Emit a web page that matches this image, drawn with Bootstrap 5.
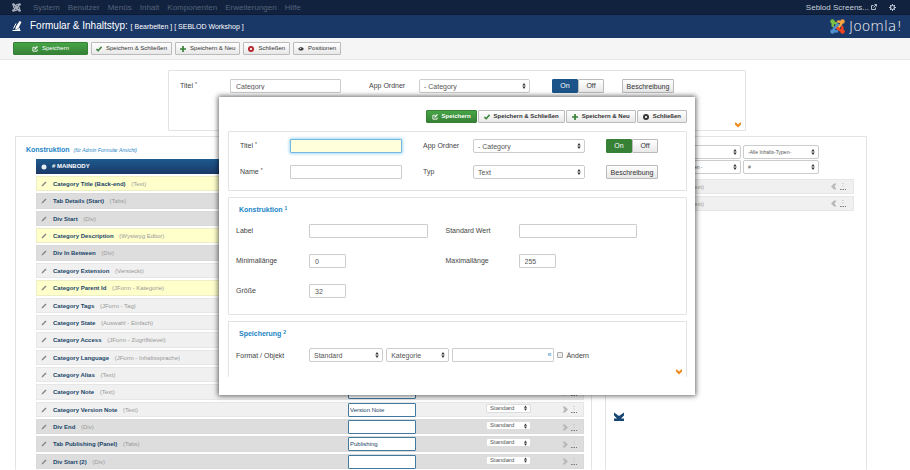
<!DOCTYPE html>
<html lang="de">
<head>
<meta charset="utf-8">
<meta name="viewport" content="width=device-width, initial-scale=1">
<title>Formular &amp; Inhaltstyp</title>
<link href="https://cdn.jsdelivr.net/npm/bootstrap@5.3.0/dist/css/bootstrap.min.css" rel="stylesheet">
<style>
body{font-family:"Liberation Sans",Arial,sans-serif;font-size:7px;line-height:9px;color:#444;background:#fff;height:100vh;overflow:hidden;position:relative}
svg{display:block;flex:none}
a{text-decoration:none;color:inherit}
.topbar{height:15px;background:#10223e;color:#55637b;font-size:8px;padding:0 14px 0 12px;border-bottom:1px solid #0c1b33}
.topbar .main-links{gap:8px}
.user-link{color:#c9d1dd;gap:2px}
.gear-link{margin-left:12px}
.titlebar{height:23px;background:#1a3867;color:#fff;padding:0 8px 0 12px}
.titlebar h1{font-size:10px;line-height:12px;margin:0;font-weight:400}
.titlebar h1 span{font-size:7px}
.brand-word{font-family:"DejaVu Sans",sans-serif;font-weight:200;font-size:14px;line-height:16px;padding-bottom:2px}
.toolbar-strip{height:22px;background:#f5f5f5;border-bottom:1px solid #e6e6e6;padding:0 13px;gap:3px}
.btn.tool{--bs-btn-padding-x:4px;--bs-btn-padding-y:0;--bs-btn-font-size:6px;--bs-btn-border-radius:1px;--bs-btn-color:#333;--bs-btn-border-color:#bbb;height:13px;line-height:11px;display:flex;align-items:center;justify-content:center;gap:4px;background:linear-gradient(#fff,#e8e8e8);white-space:nowrap}
.btn.tool.save{--bs-btn-color:#fff;--bs-btn-border-color:#378137;background:linear-gradient(#46a546,#378137)}
.btn.wide{min-width:75px}
.btn.tool.strong{--bs-btn-padding-x:5px;font-weight:700}
.btn.desc{font-size:7px;width:52px;height:14px;flex:none;padding:0}
.frame{border:1px solid #e3e3e3;border-radius:1px;background:#fff;position:relative}
.outer-form{margin:10px 164px 5px 168px;height:61px;padding:8px 71px 0 11px;gap:22px}
.pair{display:flex;flex:1 1 0;min-width:0}
.outer-form .pair:nth-child(2){margin-left:6px}
.outer-actions{gap:18px}
.form-control.inp,.form-select.sel{font-size:7px;line-height:9px;height:14px;min-height:0;padding:0 5px;border:1px solid #ccc;border-radius:1px;color:#555;flex:1 1 0;min-width:0;width:auto}
.form-select.sel{border-radius:2px;padding:0 9px 0 4px;background-color:#fff;background-image:url("data:image/svg+xml,%3Csvg xmlns='http://www.w3.org/2000/svg' viewBox='0 0 4 7'%3E%3Cpath d='M0 3 2 0 4 3ZM0 4 2 7 4 4Z' fill='%23333'/%3E%3C/svg%3E");background-size:4px 6px;background-position:right 3px center}
.form-control.focus-field{background:#ffffdc;border-color:#72b9e4;box-shadow:0 0 3px 1px #a9d8f3}
.lab{width:50px;flex:none;line-height:9px;padding-top:2px}
.lab sup,.caption-blue sup{font-size:5px;line-height:5px}
.switch{width:52px;flex:none}
.switch .btn{font-size:7px;line-height:12px;height:14px;padding:0;width:50%;border:1px solid #bbb;border-radius:1px;color:#333;background:linear-gradient(#fff,#e8e8e8)}
.switch .btn-check:checked+.btn{background:#1c5489;border-color:#1c5489;color:#fff}
.switch.green .btn-check:checked+.btn{background:#378137;border-color:#378137}
.chev{position:absolute;right:4px;bottom:2px}
.work{display:grid;grid-template-columns:577fr 262fr;padding:0 43px 0 15px;gap:13px;min-height:0}
.left-pane{min-width:0;min-height:0;padding:8px 7px 0 20px;border-bottom:0}
.right-pane{min-width:0;padding:8px 12px 0 54px;border-bottom:0}
.caption-blue{color:#1c84c6;font-weight:700;font-size:7px;line-height:9px;margin:0}
.left-pane .caption-blue{margin-left:-10px;margin-bottom:4px}
.caption-blue em{font-weight:400;font-size:5px;margin-left:2px}
.head-row{height:15px;background:linear-gradient(#1d5a8f,#1a3867);color:#fff;font-size:6px;font-weight:700;padding:0 5px;gap:5px}
.rows{gap:2px;padding:2px 0 1px;list-style:none;margin:0}
.item{flex:1 1 0;min-height:0;display:grid;grid-template-columns:12px 1fr 68px 70px 45px 31px 9px 7px;align-items:center;padding:0 5px 0 4px;background:#f0f0f0;border:1px solid #e6e6e6;font-size:6px;line-height:8px;color:#999}
.item b{color:#1a4568;margin-right:4px}
.item.gray{background:#ddd;border-color:#d9d9d9}
.item.yellow{background:#ffffcc;border-color:#eeeec4}
.item .form-control{font-size:6px;height:14px;border:1px solid #44799f;padding:0 1px;color:#1a4568;grid-column:3}
.item .form-select{font-size:6px;line-height:7px;height:9px;border-color:#ddd;padding-left:3px;grid-column:5;margin-bottom:3px;background-size:3px 6px}
.item .go{grid-column:7}
.filters{gap:2px;margin:0 35px 1px 0}
.filters .sel{font-size:5px}
.filters .sel:last-child{flex:0 0 76px}
.side-list{margin:5px 0 0;padding:0;list-style:none;gap:2px}
.side-list li{height:15px;background:#f0f0f0;border:1px solid #e6e6e6;color:#999;font-size:6px;line-height:8px;padding:0 7px 0 28px;gap:3px}
.mark-end{margin:201px 0 0 -46px}
.dialog-box{position:absolute;top:97px;left:219px;right:215px;background:#fff;box-shadow:0 0 5px 1px rgba(0,0,0,.6);padding:13px 8px 18px 9px}
.dialog-tools{gap:1px;margin-bottom:8px}
.base-form{padding:7px 28px 11px 11px;gap:12px}
.base-form .line{gap:21px}
.section{padding:7px 49px 16px 7px;margin-top:6px}
.section .caption-blue{margin:0 0 10px 3px}
.section .lab{width:73px}
.pairs{display:grid;grid-template-columns:1fr 1fr;gap:16px 18px}
.section .inp.short{flex:0 0 37px}
.store{border-bottom:0;padding:7px 97px 15px 7px}
.form-select.fmt{flex:74 1 74px}
.form-select.obj{flex:63 1 63px;margin:0 3px}
.tick{width:6px;height:6px;margin:0 3px;flex:none;border:1px solid #aaa;border-radius:1px;appearance:none;background:#eee}
.tick:checked{background:#1c84c6}
.ref-wrap{position:relative;flex:102 1 102px;display:flex;min-width:0}
.ref-wrap a{position:absolute;right:3px;top:2px;color:#1c84c6}
</style>
<script src="https://cdn.jsdelivr.net/npm/bootstrap@5.3.0/dist/js/bootstrap.bundle.min.js"></script>
</head>
<body class="d-flex flex-column">
<svg width="0" height="0" class="position-absolute" aria-hidden="true">
<symbol id="arm" viewBox="0 0 24 24"><circle cx="4" cy="4" r="3.6" fill="currentColor"/><path d="M5 12.500C3 9 5 5 9 6.500L16 13.500" fill="none" stroke="currentColor" stroke-width="4"/></symbol>
<symbol id="edit" viewBox="0 0 14 14"><path d="M12 8v4H2V3h6" fill="none" stroke="currentColor" stroke-width="2"/><path d="M5 9l1-3 6-6 2 2-6 6z" fill="currentColor"/></symbol>
<symbol id="check" viewBox="0 0 14 14"><path d="M1 7l4 4 8-9" fill="none" stroke="#378137" stroke-width="3.500"/></symbol>
<symbol id="plus" viewBox="0 0 14 14"><path d="M7 0v14M0 7h14" stroke="#378137" stroke-width="4"/></symbol>
<symbol id="close" viewBox="0 0 14 14"><circle cx="7" cy="7" r="7" fill="currentColor"/><path d="M4.500 4.500l5 5M9.500 4.500l-5 5" stroke="#fff" stroke-width="2"/></symbol>
<symbol id="eye" viewBox="0 0 14 14"><path d="M0 7q7-9 14 0-7 8-14 0z" fill="#444"/><circle cx="5.500" cy="5.500" r="1.500" fill="#fff"/></symbol>
<symbol id="pencil" viewBox="0 0 12 12"><path d="M1 11l1-3 7-7 2 2-7 7z" fill="#858585"/></symbol>
<symbol id="orange" viewBox="0 0 12 12"><path d="M0 1h2l4 4 4-4h2v4l-6 6-6-6z" fill="#ef8a1d"/></symbol>
<symbol id="right" viewBox="0 0 12 14"><path d="M1 1h5l6 6-6 6H1l4-6z" fill="#b9b9b9"/></symbol>
<symbol id="dots" viewBox="0 0 12 18"><path d="M6 2v2M6 7v2" stroke="#bbb" stroke-width="2"/><path d="M0 15h3M5 15h3M10 15h2" stroke="#777" stroke-width="2"/></symbol>
</svg>

<nav class="topbar d-flex align-items-center flex-shrink-0">
  <svg width="9" height="9" viewBox="0 0 24 24" class="me-2" color="#aab2c0"><use href="#arm"/><use href="#arm" transform="rotate(90 12 12)"/><use href="#arm" transform="rotate(180 12 12)"/><use href="#arm" transform="rotate(270 12 12)"/></svg>
  <div class="main-links d-flex ms-1"><a href="#">System</a><a href="#">Benutzer</a><a href="#">Menüs</a><a href="#">Inhalt</a><a href="#">Komponenten</a><a href="#">Erweiterungen</a><a href="#">Hilfe</a></div>
  <a href="#" class="user-link ms-auto d-flex align-items-center">Seblod Screens... <svg width="6" height="6" viewBox="0 0 12 12"><path d="M9 7v4H1V3h4M5 7l5-5M7 1h4v4" fill="none" stroke="currentColor" stroke-width="1.800"/></svg></a>
  <a href="#" class="user-link gear-link" aria-label="Einstellungen"><svg width="7" height="7" viewBox="0 0 14 14"><circle cx="7" cy="7" r="4" fill="none" stroke="#b9c2d0" stroke-width="2.400"/><path d="M7 0v3M7 11v3M0 7h3M11 7h3M2 2l2 2M10 10l2 2M12 2l-2 2M4 10l-2 2" stroke="#b9c2d0" stroke-width="2"/></svg></a>
</nav>

<header class="titlebar d-flex align-items-center flex-shrink-0">
  <svg width="10" height="11" viewBox="0 0 20 22" class="me-2"><path d="M15 0l4 2-6 12-7 4 2-7z" fill="#fff"/><path d="M8 5L3 15M1 19h16" fill="none" stroke="#fff" stroke-width="2"/><path d="M11 15l5-1v4H8z" fill="#dfe6ef"/></svg>
  <h1>Formular &amp; Inhaltstyp: <span>[ Bearbeiten ] [ SEBLOD Workshop ]</span></h1>
  <svg width="15" height="15" viewBox="0 0 24 24" class="ms-auto"><g color="#7ac143"><use href="#arm"/></g><g color="#f9a541" transform="rotate(90 12 12)"><use href="#arm"/></g><g color="#f44321" transform="rotate(180 12 12)"><use href="#arm"/></g><g color="#5091cd" transform="rotate(270 12 12)"><use href="#arm"/></g></svg>
  <span class="brand-word ms-1">Joomla!</span>
</header>

<div class="toolbar-strip d-flex align-items-center flex-shrink-0">
  <button class="btn tool save wide"><svg width="6" height="6"><use href="#edit"/></svg>Speichern</button>
  <button class="btn tool"><svg width="6" height="6"><use href="#check"/></svg>Speichern &amp; Schließen</button>
  <button class="btn tool"><svg width="6" height="6"><use href="#plus"/></svg>Speichern &amp; Neu</button>
  <button class="btn tool"><svg width="6" height="6" color="#b5242c"><use href="#close"/></svg>Schließen</button>
  <button class="btn tool"><svg width="6" height="6"><use href="#eye"/></svg>Positionen</button>
</div>

<form class="frame outer-form d-flex align-items-start flex-shrink-0">
  <div class="pair"><label class="lab" for="t1">Titel <sup>*</sup></label><input id="t1" class="form-control inp" value="Category"></div>
  <div class="pair"><label class="lab" for="a1">App Ordner</label><select id="a1" class="form-select sel"><option>- Category</option></select></div>
  <div class="outer-actions d-flex align-items-center">
    <div class="switch d-flex"><input class="btn-check" type="radio" name="o" id="o1" checked><label class="btn" for="o1">On</label><input class="btn-check" type="radio" name="o" id="o2"><label class="btn" for="o2">Off</label></div>
    <button type="button" class="btn tool desc">Beschreibung</button>
  </div>
  <svg class="chev" width="6" height="6"><use href="#orange"/></svg>
</form>

<main class="work flex-fill">
  <section class="frame left-pane d-flex flex-column">
    <h2 class="caption-blue">Konstruktion <em>(für Admin Formular Ansicht)</em></h2>
    <div class="head-row d-flex align-items-center flex-shrink-0"><svg width="6" height="6" viewBox="0 0 6 6"><circle cx="3" cy="3" r="2.500" fill="#e7edf4"/></svg># MAINBODY</div>
    <ul class="rows d-flex flex-column flex-fill" id="rows"></ul>
  </section>
  <section class="frame right-pane">
    <div class="filters d-flex"><select class="form-select sel" aria-label="Ordner"><option>- Ordner -</option></select><select class="form-select sel" aria-label="Inhaltstyp"><option>-Alle Inhalts-Typen-</option></select></div>
    <div class="filters d-flex"><select class="form-select sel" aria-label="Feldtyp"><option>- Alle Feldtypen -</option></select><select class="form-select sel" aria-label="Buchstabe"><option>#</option></select></div>
    <ul class="side-list d-flex flex-column">
      <li class="d-flex align-items-center"><span class="me-auto">(Text)</span><svg width="6" height="7" viewBox="0 0 12 14"><use href="#right" transform="rotate(180 6 7)"/></svg><svg width="6" height="9"><use href="#dots"/></svg></li>
      <li class="d-flex align-items-center"><span class="me-auto">(Text)</span><svg width="6" height="7" viewBox="0 0 12 14"><use href="#right" transform="rotate(180 6 7)"/></svg><svg width="6" height="9"><use href="#dots"/></svg></li>
    </ul>
    <svg class="mark-end" width="10" height="10" viewBox="0 0 20 20"><path d="M0 1l10 7 10-7v6l-6 6h6v5H0v-5h6L0 7z" fill="#194775"/></svg>
  </section>
</main>

<div class="dialog-box" role="dialog" aria-label="Feld">
  <div class="dialog-tools d-flex justify-content-end">
    <button class="btn tool save strong"><svg width="6" height="6"><use href="#edit"/></svg>Speichern</button>
    <button class="btn tool strong"><svg width="6" height="6"><use href="#check"/></svg>Speichern &amp; Schließen</button>
    <button class="btn tool strong"><svg width="6" height="6"><use href="#plus"/></svg>Speichern &amp; Neu</button>
    <button class="btn tool strong"><svg width="6" height="6" color="#333"><use href="#close"/></svg>Schließen</button>
  </div>
  <form>
    <div class="frame base-form d-flex flex-column">
      <div class="line d-flex">
        <div class="pair"><label class="lab" for="t2">Titel <sup>*</sup></label><input id="t2" class="form-control inp focus-field"></div>
        <div class="pair"><label class="lab" for="a2">App Ordner</label><select id="a2" class="form-select sel"><option>- Category</option></select></div>
        <div class="switch green d-flex"><input class="btn-check" type="radio" name="p" id="p1" checked><label class="btn" for="p1">On</label><input class="btn-check" type="radio" name="p" id="p2"><label class="btn" for="p2">Off</label></div>
      </div>
      <div class="line d-flex">
        <div class="pair"><label class="lab" for="n2">Name <sup>*</sup></label><input id="n2" class="form-control inp"></div>
        <div class="pair"><label class="lab" for="y2">Typ</label><select id="y2" class="form-select sel"><option>Text</option></select></div>
        <button type="button" class="btn tool desc">Beschreibung</button>
      </div>
    </div>
    <div class="frame section">
      <h2 class="caption-blue">Konstruktion <sup>1</sup></h2>
      <div class="pairs">
        <div class="d-flex"><label class="lab" for="f1">Label</label><input id="f1" class="form-control inp"></div>
        <div class="d-flex"><label class="lab" for="f2">Standard Wert</label><input id="f2" class="form-control inp"></div>
        <div class="d-flex"><label class="lab" for="f3">Minimallänge</label><input id="f3" class="form-control inp short" value="0"></div>
        <div class="d-flex"><label class="lab" for="f4">Maximallänge</label><input id="f4" class="form-control inp short" value="255"></div>
        <div class="d-flex"><label class="lab" for="f5">Größe</label><input id="f5" class="form-control inp short" value="32"></div>
      </div>
    </div>
    <div class="frame section store">
      <h2 class="caption-blue">Speicherung <sup>2</sup></h2>
      <div class="d-flex align-items-center">
        <label class="lab pt-0" for="s1">Format / Objekt</label>
        <select id="s1" class="form-select sel fmt"><option>Standard</option></select>
        <select class="form-select sel obj" aria-label="Objekt"><option>Kategorie</option></select>
        <span class="ref-wrap"><input class="form-control inp" aria-label="Feldname"><a href="#">«</a></span>
        <input type="checkbox" class="tick" id="c1"><label for="c1">Ändern</label>
      </div>
      <svg class="chev" width="6" height="6"><use href="#orange"/></svg>
    </div>
  </form>
</div>

<script>
const items=[["Category Title (Back-end)","Text","yellow"],["Tab Details (Start)","Tabs","gray"],["Div Start","Div","gray"],["Category Description","Wysiwyg Editor","yellow"],["Div In Between","Div","gray"],["Category Extension","Versteckt",""],["Category Parent Id","JForm - Kategorie","yellow"],["Category Tags","JForm - Tag",""],["Category State","Auswahl - Einfach",""],["Category Access","JForm - Zugriffslevel",""],["Category Language","JForm - Inhaltssprache",""],["Category Alias","Text",""],["Category Note","Text",""],["Category Version Note","Text","","Version Note"],["Div End","Div","gray"],["Tab Publishing (Panel)","Tabs","gray","Publishing"],["Div Start (2)","Div","gray"]];
document.getElementById("rows").innerHTML=items.map(([n,t,c,v=""])=>`<li class="item ${c}"><svg width="6" height="6"><use href="#pencil"/></svg><span class="text-nowrap"><b>${n}</b> (${t})</span><input class="form-control inp" aria-label="Label ${n}" value="${v}"><select class="form-select sel" aria-label="Modus ${n}"><option>Standard</option></select><svg class="go" width="6" height="7"><use href="#right"/></svg><svg width="6" height="9"><use href="#dots"/></svg></li>`).join("");
</script>
</body>
</html>
